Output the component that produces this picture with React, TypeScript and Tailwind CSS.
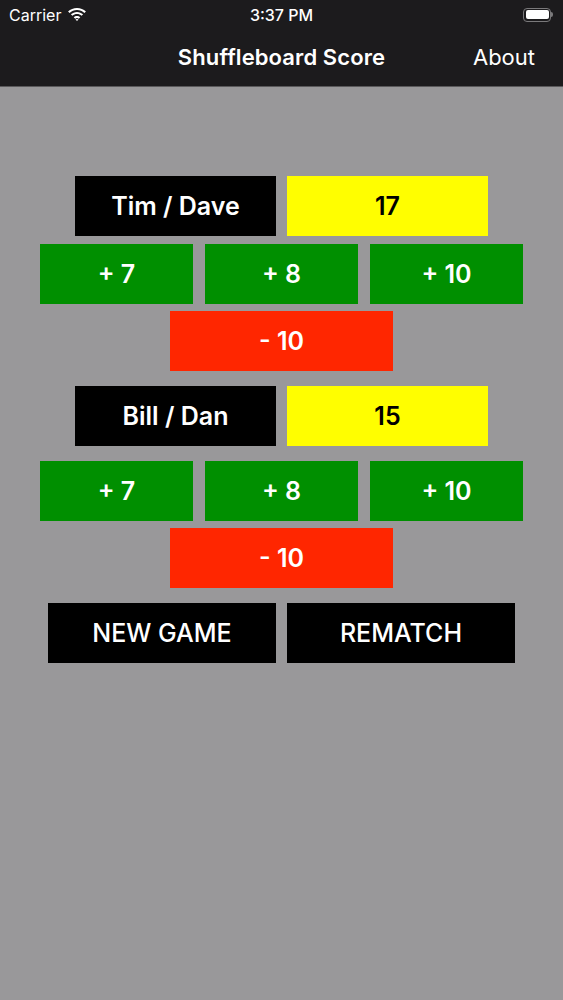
import { useState } from "react";

type Team = { name: string; score: number };

function WifiIcon() {
  return (
    <svg width="20" height="15" viewBox="0 0 17 12" fill="white">
      <path d="M8.5 2.2c2.4 0 4.6.9 6.3 2.5l1.3-1.3C14.1 1.5 11.4.4 8.5.4S2.9 1.5.9 3.4l1.3 1.3C3.9 3.1 6.1 2.2 8.5 2.2z" />
      <path d="M8.5 5.6c1.5 0 2.8.5 3.9 1.5l1.3-1.3C12.3 4.6 10.5 3.8 8.5 3.8S4.7 4.6 3.3 5.8l1.3 1.3c1.1-1 2.4-1.5 3.9-1.5z" />
      <path d="M8.5 9c.6 0 1.1.2 1.5.6l1.3-1.3c-.8-.7-1.7-1.1-2.8-1.1s-2 .4-2.8 1.1L7 9.6c.4-.4.9-.6 1.5-.6z" />
      <path d="M8.5 11.6l1.3-1.3c-.4-.3-.8-.5-1.3-.5s-.9.2-1.3.5z" />
    </svg>
  );
}

function Battery() {
  return (
    <div className="flex items-center">
      <div className="w-[28px] h-[14px] rounded-[4px] border border-[#7a797b] p-[1.5px]">
        <div className="w-full h-full rounded-[2px] bg-white" />
      </div>
      <div className="w-[2px] h-[5px] rounded-r-sm bg-[#7a797b]" />
    </div>
  );
}

function Cell({
  className,
  children,
  onClick,
}: {
  className: string;
  children: React.ReactNode;
  onClick?: () => void;
}) {
  return (
    <button
      onClick={onClick}
      className={`h-[60px] pt-[2px] flex items-center justify-center text-[25px] ${className}`}
    >
      {children}
    </button>
  );
}

function TeamBlock({
  team,
  gap,
  onAdd,
}: {
  team: Team;
  gap: string;
  onAdd: (n: number) => void;
}) {
  return (
    <div className="flex flex-col items-center">
      <div className="flex gap-[11px]">
        <Cell className="w-[201px] bg-black text-white font-semibold">{team.name}</Cell>
        <Cell className="w-[201px] bg-[#fffe00] text-black font-semibold">{team.score}</Cell>
      </div>
      <div className={`flex gap-[12px] ${gap}`}>
        {[7, 8, 10].map((n) => (
          <Cell
            key={n}
            className="w-[153px] bg-[#008f00] text-white font-semibold"
            onClick={() => onAdd(n)}
          >
            + {n}
          </Cell>
        ))}
      </div>
      <Cell
        className="w-[223px] mt-[7px] bg-[#ff2600] text-white font-semibold"
        onClick={() => onAdd(-10)}
      >
        - 10
      </Cell>
    </div>
  );
}

export default function App() {
  const [teams, setTeams] = useState<Team[]>([
    { name: "Tim / Dave", score: 17 },
    { name: "Bill / Dan", score: 15 },
  ]);

  const add = (i: number, n: number) =>
    setTeams((ts) => ts.map((t, j) => (j === i ? { ...t, score: t.score + n } : t)));

  return (
    <div className="w-[563px] h-[1000px] flex flex-col bg-[#99989a] font-['Inter','Liberation_Sans',sans-serif]">
      {/* status + navigation bar */}
      <div className="bg-[#1c1b1d] border-b border-[#5a595b]">
        <div className="h-[29px] flex items-center justify-between px-[9px] text-white text-[16px]">
          <div className="flex items-center gap-[6px] w-[120px]">
            <span>Carrier</span>
            <WifiIcon />
          </div>
          <span className="font-medium">3:37 PM</span>
          <div className="w-[120px] flex justify-end pr-[1px]">
            <Battery />
          </div>
        </div>
        <div className="h-[57px] relative flex items-center justify-center text-white">
          <span className="text-[22px] font-semibold tracking-[0.1px]">Shuffleboard Score</span>
          <span className="absolute right-[28px] text-[22px]">About</span>
        </div>
      </div>

      <div className="flex flex-col items-center pt-[89px]">
        <TeamBlock team={teams[0]} gap="mt-[8px]" onAdd={(n) => add(0, n)} />
        <div className="mt-[15px]">
          <TeamBlock team={teams[1]} gap="mt-[15px]" onAdd={(n) => add(1, n)} />
        </div>
        <div className="flex gap-[11px] mt-[15px]">
          <Cell className="w-[228px] bg-black text-white font-medium">NEW GAME</Cell>
          <Cell className="w-[228px] bg-black text-white font-medium">REMATCH</Cell>
        </div>
      </div>
    </div>
  );
}
